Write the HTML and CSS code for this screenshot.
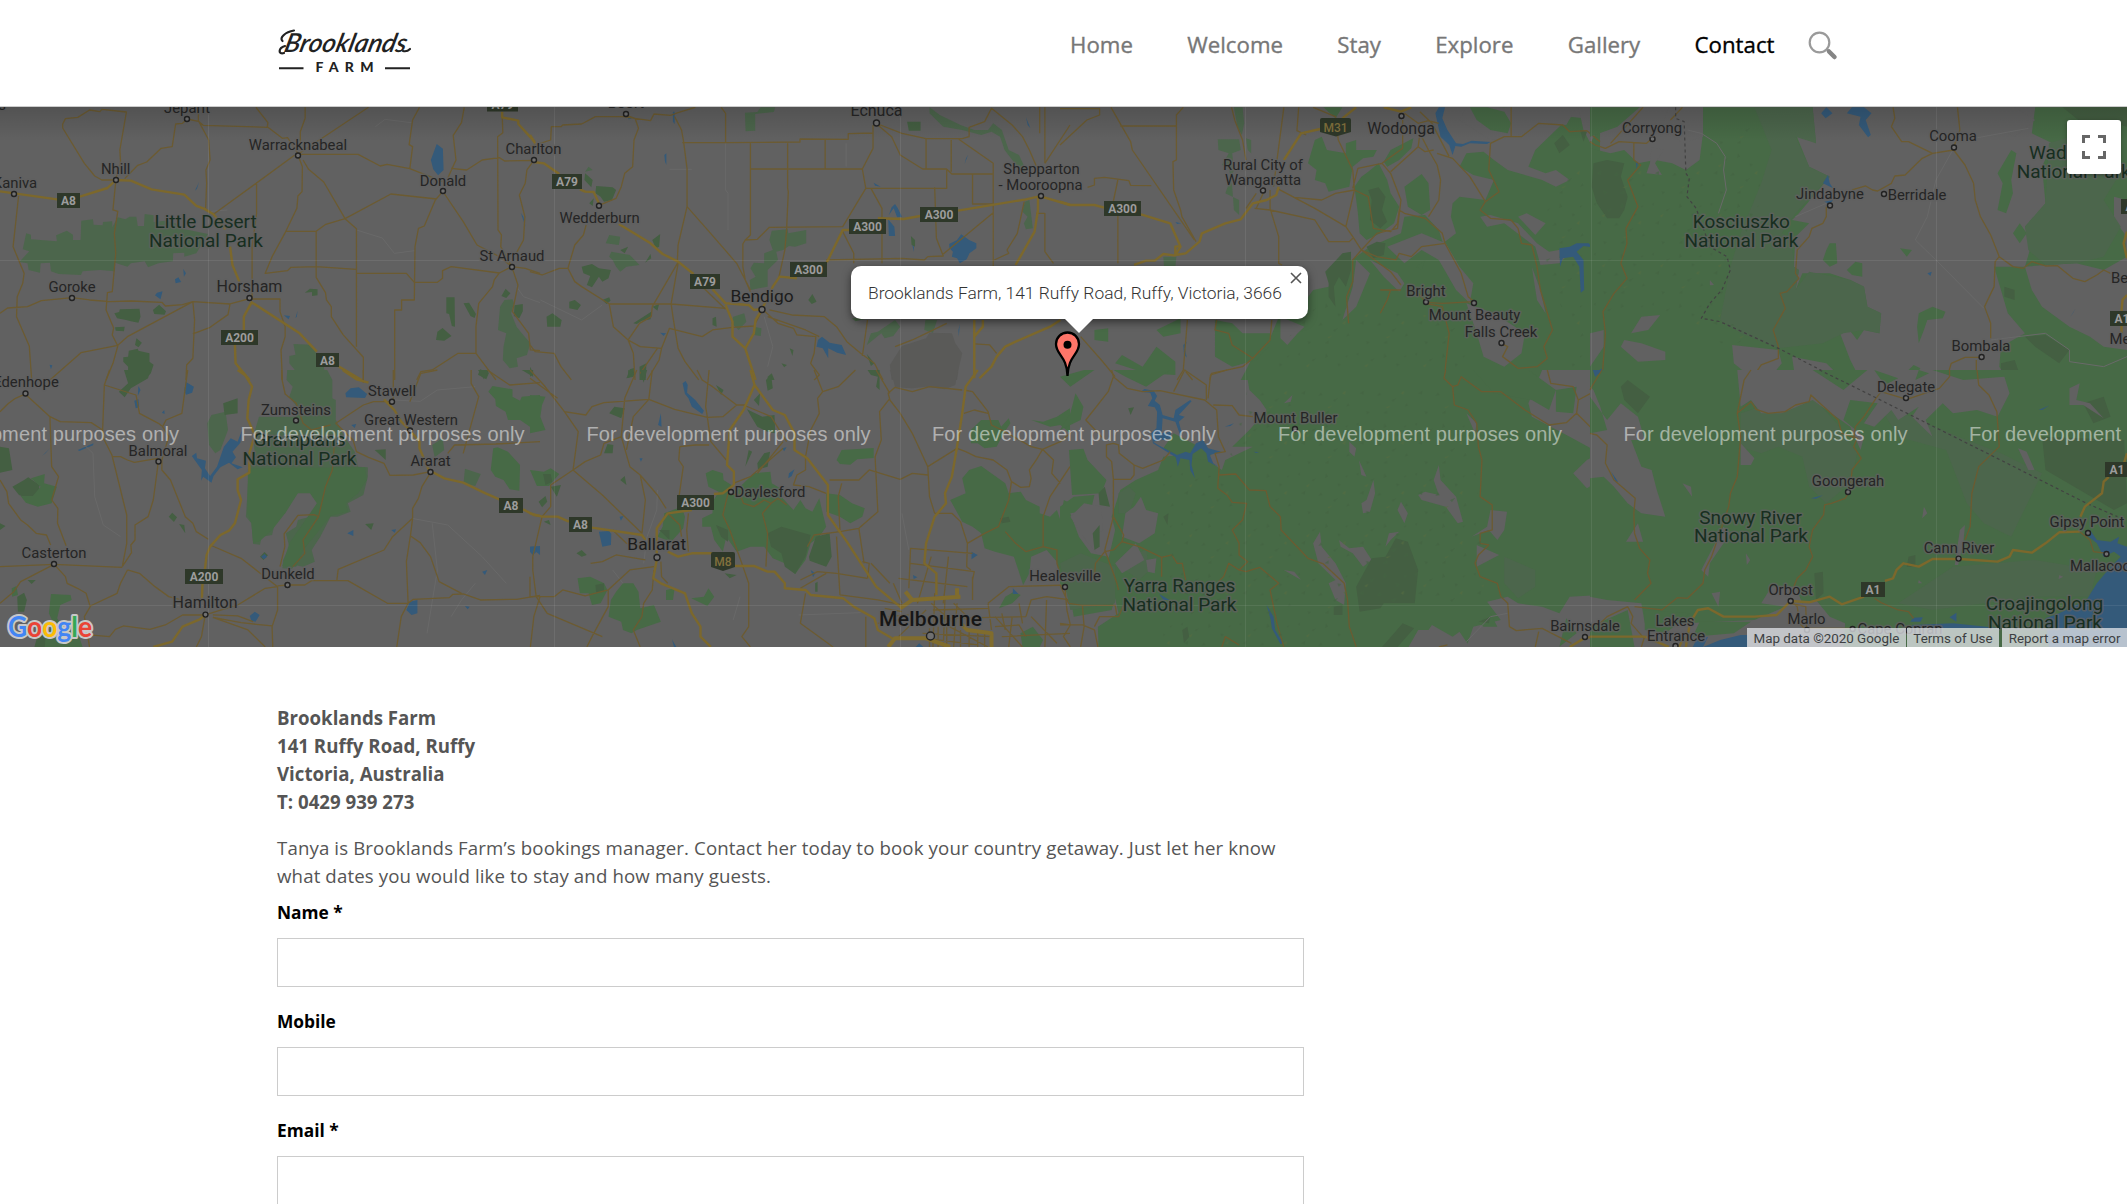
FILE: index.html
```html
<!DOCTYPE html>
<html lang="en">
<head>
<meta charset="utf-8">
<title>Contact - Brooklands Farm</title>
<link rel="stylesheet" href="styles.css">
</head>
<body>
<header class="header">
  <a class="logo" aria-label="Brooklands Farm">
    <svg width="136" height="54" viewBox="277 22 136 54">
      <g transform="translate(283 51.500) skewX(-14)"><text class="script" x="0" y="0" textLength="122" lengthAdjust="spacingAndGlyphs">Brooklands</text></g>
      <path class="swash" d="M294 30.500C285 32 279 38 282.500 41M285 46C278 48 278 55 284 53M403 51Q407 52 410 49"/>
      <text class="farm" x="315.500" y="72.300" textLength="58">FARM</text>
      <path class="rule" d="M279 68.300H303.500M385 68.300H410"/>
    </svg>
  </a>
  <nav class="nav">
    <a>Home</a><a>Welcome</a><a>Stay</a><a>Explore</a><a>Gallery</a><a class="active">Contact</a>
  </nav>
  <svg class="search" width="30" height="30" viewBox="0 0 30 30"><circle cx="11.500" cy="11.500" r="9.800" fill="#fff" stroke="#9a9a9a" stroke-width="2.200"/><path d="M18.500 18L20.500 20" stroke="#999" stroke-width="2"/><path d="M21 20.500L26.500 26" stroke="#858585" stroke-width="4.500" stroke-linecap="round"/></svg>
</header>

<section class="map">
<svg class="canvas" width="2127" height="540" viewBox="0 107 2127 540">
<defs>
  <linearGradient id="shade" x1="0" y1="0" x2="0" y2="1"><stop offset="0" stop-color="#000" stop-opacity=".15"/><stop offset="1" stop-color="#000" stop-opacity="0"/></linearGradient>
  <pattern id="relief" width="170" height="150" patternUnits="userSpaceOnUse">
    <path fill="#426341" opacity=".6" d="M10 12l9-5-4 12zM50 30l14-6-9 12zM92 8l7 12-10 5zM125 40l12 2-8 10zM20 70l13-9-2 14zM70 78l8-12 5 10zM112 90l16-7-10 14zM150 110l7-12 4 9zM38 122l12 4-8 8zM88 130l12-9v10zM148 18l9-3-5 9z"/>
    <path fill="#546b40" opacity=".75" d="M34 48l11-7-5 11zM140 70l9-8-2 12zM96 112l14-5-9 8z"/>
  </pattern>
</defs>
<rect class="land" x="0" y="107" width="2127" height="540"/>

<!-- Little Desert -->
<g class="tile" transform="translate(0 100) scale(.3444 .3333)">
  <path class="l" d="M76 400L90 404V418L165 424L163 406L194 392L212 404V420H234L236 362L270 358L272 374L298 376L299 366L326 364V382L342 352L364 358L376 350H396L400 378H418L420 342L446 346V366L480 362L510 370L520 384L604 402L570 460L535 470V458L503 460L502 484L460 490L430 502L420 484L380 490L370 500L334 488V514L290 510L240 514L235 525L170 522L148 514L145 488L118 490L116 518L83 510L80 490L56 486L70 470L85 454L66 448Z"/>
  <path class="d" d="M332 640L346 636L348 628L405 626L408 650L402 668L380 664L366 660L340 655ZM444 630L462 614L482 634L478 644L448 642ZM334 682L362 680L360 694L336 692ZM396 715L412 728L402 742L392 735ZM374 752L400 746L402 752L434 760V785L446 794L438 820L420 840H372V800L358 785V772L372 770ZM885 578L900 566L922 568V586L906 588V576ZM1296 592H1320L1321 680L1312 678L1304 642L1296 640ZM1346 610L1362 608L1382 642L1378 654L1366 648ZM1266 720L1270 695L1285 684L1311 708L1290 722ZM1456 588L1468 566L1482 580L1470 594ZM1494 616L1518 612V634L1508 655L1492 648ZM1388 824L1394 808L1420 818L1412 838Z"/>
  <path class="l" d="M852 732L905 734L918 760L940 800L948 840H835L838 815L856 810L840 790V768L858 764ZM1452 620L1465 600L1488 598L1492 610L1484 640L1500 680L1515 700L1540 730L1530 765L1500 775L1504 800L1480 805L1460 780L1462 740L1470 700L1446 690Z"/>
  <path class="w" d="M1268 132L1286 146L1288 210L1272 226L1258 208L1251 180ZM578 246L572 266L566 272ZM532 506L540 520L534 530ZM510 550L508 538L518 532L526 546ZM450 586L456 578L472 574L466 598ZM824 646L842 648L838 658ZM864 632L862 650L858 654ZM144 794L152 796L148 808ZM1512 338L1520 350L1526 380Z"/>
  <path class="h" d="M1090 80L1118 58L1195 68M1035 390L1110 414L1145 460L1205 452M1500 560L1520 590L1568 608M600 335L660 330"/>
  <path class="r" d="M336 240H296L275 228L245 190L182 84V72L190 56L226 52L260 30L290 35L296 28L367 36L348 150L350 185L336 238M543 57L530 70L510 72L500 140L468 145L426 186L400 196L362 236M543 57L576 64L590 76L778 82L820 115L835 113L865 160M576 22V62L606 120L610 180L598 210L600 250L597 328M743 22L778 68L776 82M886 22V55L872 95V150M1070 22L865 163H1040L1104 198L1124 193L1190 206L1285 245M1218 22L1198 60L1188 134L1198 140L1190 206M1348 22L1340 68L1316 106L1324 180L1300 235M1310 205L1355 210L1400 180L1450 173L1465 183L1550 181M1458 40L1460 98L1445 110L1446 390L1456 405L1454 440L1486 500M1550 181L1530 210L1525 250L1508 285L1524 350L1520 420L1500 458M855 166L620 343M745 246V340L732 440V598M865 165L878 200L877 275L865 288L862 325L830 394H918V500M880 180L896 208L940 246L1002 356L1035 386V740M1268 297L1135 282L1002 356L946 373L918 394M830 394L790 470L770 520L835 512L845 502L918 500L1035 508V520H1180L1203 547M1285 275L1264 300L1232 378L1215 385L1205 440L1203 600H1166V630H1146V840M1285 273L1345 365L1385 435L1450 470L1486 500M1203 547H1270L1285 535V512L1310 500L1450 519L1486 500L1525 505L1568 520M1450 519L1435 540L1430 560L1390 610L1382 680V760L1440 840M1486 500L1504 555L1488 635L1535 700L1540 750L1568 752M918 500V532L945 578L948 600L962 620V650L996 704L1055 772V840M54 288L38 440L70 520L66 550L50 590L48 650L85 738L92 840M0 640L22 624L80 620L120 602L210 593L260 600L320 605L380 603L470 607L480 618L530 614L560 605L668 612L722 597H813V635L828 680V710L816 750L820 840M336 245L328 330L342 334L332 400L336 460L326 575L312 578L308 630L330 684L326 705L342 738L328 790L308 840M560 605L370 710L342 736L235 758L145 840M560 605L565 660L560 775L542 795L540 840M668 612L662 644L610 682L560 702M1210 840L1222 815L1255 810L1330 760H1382"/>
  <path class="R" d="M0 274L166 298M232 290L312 264L336 240L380 242L440 268L535 284L570 318L592 326L620 343L655 388M668 440L675 495L695 545M728 605L870 700L920 755M984 800L1050 840M730 608L708 650V690M682 734L684 790L716 830L725 840M1458 35V52L1505 62V72L1552 125"/>
</g>

<!-- Grampians -->
<g class="tile" transform="translate(0 370) scale(.3444 .3333)">
  <path class="l" d="M834 0H950L965 30V85L975 90V150L1000 200L1030 245L1040 290L1068 292V320L1055 375L1010 400L1018 425L980 440L960 440L930 500L905 540L914 575L880 590L855 585L848 597L820 595L822 570L840 530L830 490L860 470L865 450L900 440L925 400L905 370L870 365L850 380L828 430L800 450L790 495L760 500L755 524L735 522L730 460L714 440L720 340L740 310L720 290L740 250L735 200L752 140L860 140L862 110L840 80L850 50L832 30ZM602 160L614 135L655 125L662 180L640 240L625 250L607 225Z"/>
  <path class="g" d="M720 296L1060 292L1065 330L1040 370L1005 400L1010 425L960 438L920 490L880 540L860 590L820 588L840 520L920 400L900 370H865L828 430L790 480L752 515L735 518L730 460L718 430Z"/>
  <path class="d" d="M360 0H436L430 25L380 55L362 82L345 65L372 40ZM648 100L690 85V130L652 135ZM490 440L500 428L514 442L505 456ZM520 462L535 465L538 490ZM755 560L768 546L778 556L765 570ZM1060 462L1085 460L1078 480ZM1088 240L1120 238V270ZM0 230L26 235L36 300L0 308ZM36 350L70 330L82 322L115 345L110 375L95 390L55 375ZM0 460L16 468L0 480ZM80 630H104L92 642ZM50 680L70 668L78 690L70 725H52ZM1388 0H1420L1405 28ZM1515 0H1548V20ZM108 800L140 790L180 800L210 831H100Z"/>
  <path class="g" d="M90 325L130 312L128 340L165 350L150 400L110 410L75 398L60 378H95L118 350ZM1418 65L1430 48L1488 58V80L1510 92L1515 80L1568 75V160L1545 175L1510 150H1475L1468 125L1440 108L1438 88ZM1432 235L1445 232L1475 245L1510 285L1508 362L1480 358L1462 330L1438 320L1425 300ZM34 655L48 648L52 675L35 680ZM148 672L205 675L208 690L175 705L166 745L195 790L220 770L240 831H130L132 800L155 760L142 730Z"/>
  <path class="l" d="M1350 296L1396 312L1380 348L1346 340ZM1255 225L1285 205L1290 240L1262 262Z"/>
  <path class="w" d="M1018 55L1042 52L1066 72L1060 84L1005 82L1003 70ZM540 36L563 50L558 68L540 74L535 60ZM470 128L477 120L478 132ZM390 92L402 88L404 112L394 115ZM402 48L408 60L400 78ZM226 240L272 220L270 226L230 243ZM145 235L122 258L132 250ZM557 258L570 248L572 265L598 272L595 295L610 318L630 290L650 230L670 205L690 215L702 182L698 218L675 245L685 262L672 280L705 292L690 298L665 278L640 292L620 318L614 338L590 320L584 332L586 300ZM1008 490L1026 480V498ZM1136 480L1150 478L1146 488ZM758 560L768 552L776 560L766 568ZM1180 720L1190 695L1212 690V730L1195 735ZM725 738L740 725L754 735L742 755L730 752ZM1540 530L1568 528V555ZM1400 605L1415 600L1408 615ZM1350 708L1364 710L1358 718ZM1020 165L1034 162L1030 174Z"/>
  <path class="h" d="M225 205L270 250L275 380L300 465L350 500M1195 445L1300 465L1400 560L1470 640M1255 460L1270 600L1240 790M1140 90L1220 94L1270 60L1380 50M1380 640L1340 690L1310 740"/>
  <path class="r" d="M73 72L45 85L25 100L0 125M73 72L145 140L175 155L265 158L298 180M145 140L150 290L170 320L150 390L168 415L167 460L192 527M318 0L303 45L298 180L300 205L325 255L368 435V520L355 590M303 45L395 75L405 130L460 160L470 168M545 0L528 130L482 150L472 170L490 200L470 270M325 260H350L370 270L390 277L458 265V290L445 390L430 440L392 465V510L380 525L382 548L355 590M470 270V300L495 330L538 440L560 460L570 485L605 508M0 330L20 365L25 400L60 450L80 465L105 490L135 495L147 525M0 590L157 583L355 592M157 583L60 635L40 665L0 700M157 583L190 620L195 640L225 655L250 670L262 710L245 740L260 831M370 600L350 640L340 670L262 708M370 600L405 610L450 650L490 680L525 690M610 525L700 565L806 650M806 648L834 645H885L905 632H1010L1125 700H1185L1200 688L1305 683L1315 673L1345 672L1395 690L1500 688L1568 676M806 650L770 655L690 705L596 735M806 650V720L790 770L792 831M596 735H530L480 765L435 778L358 768L335 778L318 800L260 795M596 735L585 800L570 831M618 742L700 758L790 768M618 735L690 738L735 755M618 742L720 780L770 831M978 632L982 598L1115 540L1140 500L1198 445M1198 445V415L1215 385L1225 350L1250 308M1198 445L1192 495L1180 575L1185 700L1165 740L1152 831M1192 498L1220 518L1250 560L1275 635L1340 670M1250 305L1200 315L1132 316L1115 280L1070 262L1035 245L1025 210L975 160L1055 105L1085 95H1135M1300 250L1320 225L1440 222L1568 215M1345 250L1390 80L1368 40V0M1415 0L1480 45L1568 38M970 190V235L965 300L945 350L925 440L880 510L885 550L850 590M925 440L912 434L865 436L825 492L827 530L813 590M1055 0V38M1142 0V92M1270 0L1222 10L1190 95M818 0V25L828 72L860 100L880 160L905 180L960 165M1568 680L1550 740L1540 831"/>
  <path class="R" d="M690 0L712 16L732 50L722 90L718 145L740 195L724 250V308L690 328V360L700 390L682 460L665 482L640 495L610 530L600 555L595 598M588 641L586 690M596 735L580 748L530 770L500 815L445 831M995 0L1035 28L1070 38M1115 88L1145 120L1165 155L1190 180L1218 215V235L1245 300L1290 325L1345 338L1410 370L1450 388M1519 418L1550 435L1568 438"/>
</g>

<!-- Bendigo -->
<g class="tile" transform="translate(530 100) scale(.3444 .3333)">
  <path class="l" d="M624 38L660 36L670 22H712L708 36L654 42V92L626 94ZM702 392L748 388L750 400L802 390V430L770 440L752 438L735 450L715 455L720 480L690 510V560L640 570L638 540L655 530L640 505L650 488L680 490V460L705 450L695 420ZM1437 305L1450 300L1460 385L1440 388L1434 370L1445 350L1430 335ZM236 455L290 465L318 495L280 500L262 515L250 500L240 480L230 470ZM1160 22L1190 45L1250 75L1290 90L1330 90L1345 70L1370 90L1390 150L1420 165L1440 210L1430 220L1378 150L1365 110L1340 95L1310 105L1255 90L1200 80L1160 40ZM220 430L230 405L262 410L258 435ZM590 650L622 640L628 665L606 690L585 670ZM650 680L672 685L670 708L650 705ZM978 735L990 700L1010 695L1060 660L1075 680L1055 708L1030 715L1020 700ZM1148 660H1182L1170 698L1145 690ZM170 200L182 210L160 215Z"/>
  <path class="d" d="M1095 65H1134V92H1100ZM160 220L182 240L178 262L158 240ZM192 258L240 262L250 270L238 300L215 305L205 290L190 280ZM172 310L185 295L182 318ZM150 500L180 492L200 505L235 510L228 535L210 545L200 530L180 562L165 555L175 528L155 520ZM355 420L378 402L375 440L365 445ZM334 488L350 462L352 475ZM262 450L285 440L275 460ZM114 605L130 600L148 615L138 630L114 625ZM210 600L230 592L234 602L222 612ZM48 650L65 640L92 660L88 680L50 680ZM530 655L540 650L542 680L530 675ZM300 670L352 635L350 658L325 662L310 672ZM356 620L375 612L370 632ZM808 600L820 582L832 605L818 612ZM1106 408L1118 420V440L1108 435ZM754 745L765 750L762 768ZM730 790L746 795L738 802ZM690 830L702 820L710 840H690ZM280 835L290 808L302 804V830ZM318 800L338 790L336 840H318ZM978 762L1000 790L990 798ZM0 800L10 820L0 830ZM935 655H980L945 664Z"/>
  <path class="u" d="M1045 795L1080 738L1150 715L1160 698L1225 700L1235 730L1255 760L1245 805L1240 840H1050Z"/>
  <path class="w" d="M1217 432L1240 420L1252 403L1275 420L1296 430V445L1276 460L1268 478L1248 490L1240 475L1225 470L1228 455L1218 445ZM1040 358L1058 380L1060 408H1042ZM1060 312L1068 325L1080 350L1066 352L1056 325L1042 345L1050 322ZM836 720L848 710L870 728L905 735L918 765L892 758L866 745V775L850 745L832 740ZM390 165L396 160V195L392 185ZM415 35H420V72L415 65ZM1440 52L1453 85L1445 75ZM1272 165L1262 192L1266 175ZM998 248L1018 260L1002 257ZM1110 435L1115 440V456ZM1248 672L1245 710L1244 690ZM378 698L395 700L388 708ZM284 50L295 56L286 58Z"/>
  <path class="h" d="M568 130V270L575 280V390M918 130V200M1345 330V495M405 208H470M30 600L150 660L210 615M680 650L705 740L690 800"/>
  <path class="r" d="M0 140L60 120L62 80H90L95 75L150 72L190 50H270L350 62L360 42L408 46L430 38L480 22M278 45L305 55L315 85L302 120L298 200L275 220L265 260L250 295L200 316M420 50L440 90L446 125L456 206V320L520 395L600 490L640 570M456 320L430 435L428 480L430 490L410 610M442 128H568V40L555 22M568 128L784 126V117L924 118V101L996 99M640 130V405L625 420L618 432V500L625 540L640 575M857 117V207M640 207H965L996 145V75M748 130V265L750 275L745 390L740 450L722 535M624 420L660 418L695 382L908 380L975 265L965 207M975 265H1210V208L1225 222H1345M1175 262L1180 415L1200 468L1155 470L1145 480L1080 475L860 480M990 265L1022 325V350M1022 350V490M908 395L940 460V490M1010 75L1050 110L1075 165L1140 207H1210M1010 72L1080 100L1150 116H1255L1275 110V82L1320 65L1340 25L1400 75L1430 110L1450 150L1475 210M1150 116V207M1223 120V215M1245 118L1345 190V500M1285 222V312H1345M1345 338L1200 462M1495 22V190M1568 75L1495 190M1435 305L1415 400L1385 450L1390 460L1348 480M1470 340H1495V455L1520 490M1480 100V22M163 375L155 405L130 435L110 505L85 505L35 525L0 515M110 505L130 545L150 560L230 612H410L568 625M230 612L242 680L285 720L300 760L305 840M428 490L355 620L352 650L318 670L285 720M410 612L415 650L430 745L450 785L490 840M285 720L320 740L382 745L405 685L500 710L530 690L588 682L650 678L675 630M382 745L375 780L340 840M320 820L370 745M568 628L480 540M675 628L720 670L765 685L775 705L830 710L825 760L815 790L840 825L825 840M695 630L760 645L855 650L890 680L920 725L960 760L1000 790L1025 840M690 650L800 690L840 710M965 768L980 660M1060 740L1110 720L1150 700L1210 670M1290 732L1335 735L1355 760M0 735L15 755L70 760L90 800L120 840"/>
  <path class="R" d="M0 105L15 130M11 186L40 190L85 222M145 268L160 275L185 276L200 310M258 372L350 430L385 462L430 485L475 522M530 568L568 610L635 615L650 630L674 627L705 560L725 530L775 535M862 487L908 390H927M1010 355L1085 357L1133 348M1243 332L1440 298L1475 290V330L1465 395L1410 495M1485 290L1568 315M674 627L655 660L650 700L625 745L655 840M568 615L588 665V710L625 745M1290 660V835M1315 660V680L1290 710M1540 660L1510 680L1410 725L1380 740L1355 770L1340 800L1305 835"/>
</g>

<!-- Melbourne -->
<g class="tile" transform="translate(530 370) scale(.3444 .3333)">
  <path class="g" d="M510 310L530 300L560 310L562 330L585 345L580 365L600 360L650 310L698 305L702 340L735 360L730 380L765 420L785 390L800 415L820 425L840 385L850 430L860 470L840 500L815 520L800 570L770 612L740 580L705 565L680 530H640L600 545L570 500L560 545L535 510L525 470L500 470V445L530 430V395L548 365L518 350ZM890 270L905 240L998 234V264L950 268L930 284L900 282ZM1220 390L1265 370L1255 325L1275 300L1310 288L1380 340L1390 370L1425 365L1440 390L1480 410V430L1510 440L1530 420L1540 450L1550 390L1568 400V620H1540L1530 575L1500 540L1455 560L1450 610L1432 645L1405 560L1350 545L1320 535L1310 490L1285 470L1255 455ZM390 430L440 410L450 440L445 475L410 515L370 500L385 470ZM138 625L175 620L215 640L225 660L205 700L180 705L170 670L145 670ZM250 665L270 640L300 640L315 665L320 715L360 705L380 755L310 780L295 790L270 780L265 755L228 740L235 690ZM0 75L45 80L35 105L30 140L45 180L0 190ZM0 300L40 305L60 295L85 312L55 348H20ZM860 370L900 375L935 400L972 415L965 440L930 460L900 440L860 425ZM1280 180L1310 150L1360 150L1368 170L1390 145L1395 160L1375 190L1355 230L1320 235L1300 220L1280 220ZM1455 150L1490 155L1530 140L1568 115V190L1540 165L1510 170ZM468 685L505 680L518 655L535 680L515 708ZM1362 715L1380 680L1405 665L1425 675L1400 700ZM1424 790L1460 770L1490 810L1480 831H1430ZM395 660L420 655L415 690H395Z"/>
  <path class="d" d="M690 490L730 470L815 495L800 560L770 612L740 590L730 550L700 530ZM810 560L830 500L870 490L876 560L860 590L812 572ZM215 250L225 222L242 225L240 250ZM262 330L275 318L280 345ZM135 550L150 540L165 555L150 560ZM38 312L60 312L65 335L45 345ZM25 395L45 378L50 395L35 412ZM630 118L675 140L710 135L712 190L690 185L660 170L645 145ZM685 30L700 15L705 55L690 62ZM650 90L668 70L665 108ZM660 280L680 250L697 245L690 290L662 298ZM625 290L635 240L645 245ZM190 645L215 640L215 665L192 668ZM565 610L600 615L580 625ZM828 640L835 635V665H828ZM540 465L575 480L575 515L555 500ZM375 480H405V510ZM980 0H1015V60L1005 50L1010 20L990 15ZM285 0L300 5L285 25ZM320 0H340L330 38ZM540 45L562 60L555 75ZM230 130L245 110L275 115L265 145ZM1365 445L1390 440L1395 455L1370 460ZM60 350L90 345L78 380ZM40 455L55 450L60 465Z"/>
  <path class="u" d="M1045 0H1242L1235 45L1205 58L1150 50L1110 55L1060 52L1055 30Z"/>
  <path class="w" d="M443 40L452 33L458 45L456 68L480 90L505 122L500 132L470 110L460 85L450 72ZM372 165L380 130L382 170ZM200 485L230 483L236 492L235 525L210 530ZM752 310L768 298L760 318L750 325ZM732 235L745 232L738 244ZM0 530L18 530L20 545L8 555L0 545ZM1282 545L1300 555L1282 568ZM1402 655L1418 672H1402ZM815 600L828 610L822 622ZM260 440L272 438L264 452ZM318 265L327 265L322 275ZM1112 615L1125 622L1114 627ZM412 808L425 831H418ZM1120 831L1130 820L1142 831Z"/>
  <path class="h" d="M370 360L368 420L340 500L330 580M1100 540L1080 430M240 600L270 640M780 735L960 728M590 750L610 680"/>
  <path class="r" d="M0 0L40 45L100 125L140 185L125 300L60 345V410L35 440L8 560V600L18 680M100 125L162 135L180 110L215 98L345 88L420 118L515 142L510 110L520 0M310 0L275 85L265 200L290 290L320 315L370 375L395 415M355 0L345 88L300 140L280 240M0 25L80 85M125 300L160 275L205 255L215 220L265 200M125 300L210 375L325 490M320 315L335 390L325 490M485 0L500 30L530 50L600 105H630M620 105L700 140L745 215M515 142L560 140L600 105M515 142L525 215L570 270M850 65L835 85L840 130L815 180L800 260M850 65L825 0M850 65L895 50L945 0M660 310L735 215M590 340L640 320L735 235M575 370L560 435L580 480L615 580L635 640V770L615 800L640 831M575 370L610 375L620 400L650 410L680 390L700 400L675 430L690 490L685 590M700 400L720 385L745 405M800 260V300L775 315L765 345L810 350L860 370M870 330L955 330L985 300L1075 328L1110 310L1155 315M1155 290L1240 235M1155 290L1160 380L1175 430M1155 290L1110 190L1075 130L1045 90L1040 70L1060 52L1110 65L1160 50L1255 60M1045 70L1005 0M1045 85L1015 125L1020 210L1002 260L1010 425L955 475L900 485L825 495L805 530M1240 235L1265 245L1295 260L1345 270L1365 285L1385 300L1398 335L1390 390L1360 470L1320 490L1270 520L1268 590L1280 600M1398 335L1425 352L1450 350L1455 325L1450 300L1470 270L1488 238L1520 270L1515 310L1540 340M1260 60L1285 65L1330 125L1340 165L1370 180L1455 230L1488 238L1540 215L1568 190M1260 130L1290 120L1330 130M1175 430L1225 430L1250 455L1270 520M1380 485L1410 520L1440 545L1490 530L1530 540V580L1545 630M1490 530V440L1510 380L1568 290M435 230L480 225H520M435 230L432 270L445 290L430 400M460 430L455 480L460 545M400 430L435 465L440 500M0 620L0 680H70L95 660L160 678L227 660V710L180 800L165 831M18 680L50 730L210 800M227 660L290 600L360 590M176 580L210 575L250 555L335 570M240 480L280 520L330 530M360 600L355 660L330 700L325 740L300 780L320 831M380 575L382 620L400 640M800 670L785 760L880 831M785 630L835 605L890 610L980 625M890 500L900 675M955 475L970 580M860 610L785 655M980 625L985 580L965 575M905 340L895 380L900 480M900 675L1010 690L1080 705M1100 655L1105 535L1285 550M1105 580L1290 605L1285 630M1070 625L1270 650M1125 700L1165 560M1200 700L1215 560M1175 670L1170 831M1240 700L1230 831M1080 700L1055 640M1045 640L990 580M1330 700L1390 650L1568 645M1170 720L1330 715M1190 745L1440 740M1330 700L1340 780M1285 620V690M1440 740L1455 690L1500 680L1568 690M1350 740L1430 831M1455 740L1530 820M1400 740L1390 831M1500 690L1495 831M1370 800L1568 790M975 740V831"/>
  <path class="r" d="M1140 790L1340 800M1150 805L1300 825M1160 775V831M1185 770V831M1210 770V831M1250 780V831M1275 780V831M1300 780V831M1320 790V831M1200 760L1330 831M1230 700L1300 770M1150 720L1070 800M1165 700L1230 760M1205 680L1200 831M1030 715L1080 725M1040 740L1100 735M1350 770L1420 765L1440 800M1370 730L1380 780M1420 700L1430 760M1010 760L1070 750"/>
  <path class="R" d="M0 430L35 440H80L113 455M180 473L325 495L335 510M368 550V475L400 430L470 420M534 372L560 370L592 345V305L572 285L580 180L620 120L652 45L640 0M652 45L705 120L740 135L768 190V240L805 265L865 345V435L920 515L1005 650L1080 715M1300 0L1265 50L1255 130L1240 230L1225 320L1205 370L1208 400L1175 440L1150 520L1145 580L1180 610V675M400 545L430 560L470 550L530 550M595 588H650L690 605H710L740 640V655L800 660L815 675L910 685L940 710L1000 745L1010 780L1060 810M368 570L358 625L380 640L450 670L470 730L495 770V800L525 831"/>
  <path class="X" d="M1090 665L1110 690L1075 715M1110 690L1250 680M1240 655V675M1040 831L1060 805H1150L1220 831M1250 760L1270 780L1340 790V831"/>
</g>

<!-- Alpine forest -->
<g class="tile" transform="translate(1060 100) scale(.3444 .3333)">
  <path class="g" d="M525 840L560 770L610 715L640 640L700 620L735 570L780 560L820 500L860 470L900 440L990 400L1000 350L1060 345L1100 390L1112 430L1150 400L1135 350L1140 310L1160 290L1235 300L1260 240L1200 225L1160 200L1180 160L1230 155L1260 180L1300 210L1400 240L1440 260L1480 240L1440 210L1410 220L1360 200L1380 150L1440 90L1480 50L1568 60V840ZM855 260L875 230L895 215L925 190L950 240L960 280L985 320L970 370L930 400L890 420L870 400L865 340ZM1000 260L1050 222L1070 250L1075 330L1050 345L1010 320ZM940 185L960 150L1026 115L1020 145L985 180L950 200ZM830 130L860 120L860 150L920 150L910 170L880 175L850 200L840 260L780 275L770 250L740 240L745 210L720 190L740 120L760 110L775 150L830 160ZM765 22H820L800 55ZM1190 45L1215 30L1290 22L1360 40L1330 60L1300 100L1250 90L1210 75ZM450 100"/>
  <path class="l" d="M458 118H520L525 150L500 160L505 210L480 280L520 300L520 345L505 330L500 260L490 200L470 195L490 160L460 150ZM540 115L555 120V160L545 150ZM505 22H530L535 70L528 105L515 80ZM300 470H338L335 500H302Z"/>
  <path class="n" d="M950 440L1050 400L1120 430L1160 500L1200 550L1190 610L1150 570L1100 480L1050 450L1000 490ZM900 480L980 520L1000 550L985 575L940 530ZM860 480L900 520L860 620L820 660L850 560ZM1240 380L1290 370L1380 440L1395 495L1450 490L1500 440L1420 455L1385 430L1330 370L1250 345L1220 350ZM1330 350L1355 340L1410 370L1380 405ZM1370 500L1395 570L1410 640L1385 600ZM1180 610L1260 640L1350 700L1340 760L1290 800L1230 770L1210 700ZM640 650L710 680L690 700L660 735L640 715ZM1240 22H1180L1160 60L1250 120L1320 110L1400 70L1470 75L1500 22ZM1505 22H1568V75L1540 130L1520 90Z"/>
  <path class="g" d="M450 660L500 670L530 700L610 700V735L570 780L500 800L450 770ZM280 690L350 655V700L300 710ZM160 790L180 765L240 800L280 740L335 785V825L250 820ZM1035 500L1060 480L1050 510ZM1190 22H1240L1290 35L1310 70L1300 100L1250 90L1210 60ZM100 690L140 685V725L100 720Z"/>
  <path class="d" d="M770 515L820 460L845 455V510L830 560L810 530L795 560L800 620L780 590V550ZM895 270L925 262L945 290L935 330L950 365L930 385L900 360L905 300ZM890 440L920 425L945 430L940 465L910 475ZM1435 130L1460 105L1480 135L1450 160ZM1510 90L1530 95L1520 125ZM1568 235L1548 250V300L1568 320Z"/>
  <path fill="url(#relief)" d="M640 740L760 600L900 640L1050 640L1180 700L1200 840H560ZM1420 280L1568 160V840H1430L1500 700L1400 520Z"/>
  <path class="w" d="M1090 40L1100 22H1118L1110 55L1125 90L1150 130L1170 132L1195 122L1250 126L1240 132L1190 130L1165 140L1148 138L1140 165L1130 135L1105 110ZM1450 445L1480 440L1500 430H1535L1545 442L1520 438L1500 455L1520 480L1522 570L1512 578L1508 500L1490 470L1460 475L1452 500ZM358 735L368 725L362 745L368 772L360 765ZM335 366L352 370L340 372ZM1158 505L1168 525ZM1548 815L1568 805V830Z"/>
  <path class="r" d="M0 26H115V45L78 60L0 135M148 22L205 125L210 150L390 420M175 78H338M358 22L338 45V180L328 185L330 270L350 330L354 350L395 425M168 240L155 303M168 347V490M80 262L100 255V235L130 232L200 242L205 256L265 257M498 22L508 62L530 120L540 180M650 22L625 220M693 22L688 92L715 105M735 22L800 50L808 120L850 210L855 270L830 380L850 410L875 450M630 265L680 292L760 300L800 280L855 270L895 290L910 385L960 395L980 370L985 330L1000 340L1060 355L1110 400L1118 430M630 265L740 325L830 380M565 325L610 330L740 360L780 425L840 425L850 415M610 270V325L635 410V490L645 495M540 325L570 280M570 325L590 280M625 220L620 260M875 450L920 400L980 385L990 300L960 220L935 190L995 145V60M935 190L865 205L850 265M960 215L1040 140L1045 100L1070 150L1095 195L1105 240L1100 300L1070 350M1040 140L1060 155L1085 150M1095 160L1140 175L1190 230L1235 305L1220 330L1250 355L1310 360L1330 385L1340 430L1370 435L1385 500L1395 570L1430 690L1405 740L1415 775L1385 800L1330 805L1285 770L1300 740L1281 730M1235 305L1275 275L1245 210L1250 130L1290 110L1340 110L1390 70L1460 75L1480 95L1530 92L1568 125M1045 35L1080 70L1130 170M1000 40L1040 70L1070 62L1100 70M1118 430L1050 440L1020 470L985 460L975 480L920 470L875 450L850 480V545L832 590L838 670M875 450L960 515L990 555M1118 430L1165 520L1185 590L1203 605L1110 610L1063 607L1040 580M1060 610L1110 620L1130 700L1115 840M930 570H990M930 640L950 600L960 570M1310 22V110M370 660L358 810L340 840M455 660L450 690L490 700L500 735L560 775L610 720L615 660M560 775L530 800L440 820L435 840M60 710L120 780L160 830M365 815L385 840"/>
  <path class="R" d="M0 305L30 315H100L128 323M235 343L320 370L350 440L335 465L365 460L405 425L412 400L480 370L525 358L560 310L600 300L628 285L635 260M650 180L700 100L755 87M215 495L250 482H275L300 462L335 467M335 467V440L350 438M820 55L860 22M940 22L990 35L1020 22"/>
</g>

<g class="tile" transform="translate(1060 370) scale(.3444 .3333)">
  <path class="g" d="M540 0H1568V831H112L110 770L170 730L150 640L140 570L160 480L150 440L175 360L220 330L285 300L300 260L400 250L470 300L480 270L560 230L500 230L550 180L600 120L580 90L550 60ZM26 240L68 236L80 270L135 330L120 370L35 375ZM0 410L40 380L100 375L90 420L30 430L55 500L90 550L140 560L170 650L150 720L40 740L30 680L0 640ZM0 180L30 130L45 70L68 110L60 150ZM0 20L70 0H100L30 50ZM155 0H320L250 50L190 20Z"/>
  <path class="l" d="M0 580L60 550L160 590L160 700L30 720ZM170 370L200 350L220 370L200 430L170 430ZM185 560L250 540L260 600L230 630L190 600ZM1290 560L1380 600V650L1330 685L1290 640Z"/>
  <path class="n" d="M180 500L190 430L215 410L235 380L250 420L285 430L275 490L230 520ZM160 580L220 520L245 570L180 610ZM250 570L280 565L275 610L255 605ZM30 440L70 400L120 410L125 480L100 500L105 550L60 490ZM840 215L860 235L855 260L840 245ZM875 400L890 390L910 330L915 370L900 425L880 430ZM980 420L990 395L1010 430L1000 460ZM1040 375L1060 365L1100 375L1085 330L1100 285L1105 330L1150 380L1170 455L1155 460L1120 410L1050 390ZM735 520L755 485L760 530L800 580L830 640L825 705L800 690L780 640L800 630L750 580ZM810 510L840 535L880 530L905 570L880 590L850 550L815 530ZM945 530L955 490L985 485L960 510ZM1250 420L1298 425L1290 480L1270 510L1245 480L1195 500L1240 470ZM1400 0L1360 100L1370 140L1480 200L1568 250V0ZM1240 695L1300 680L1330 700L1400 710L1450 730L1480 680L1568 675V831H1180L1200 770L1280 750ZM1012 831L1040 780H1070L1080 765L1140 800L1160 785L1190 831ZM1490 310L1530 270L1568 250V330L1530 355ZM868 270L890 320L875 315ZM1180 130L1210 160L1205 190ZM650 600L680 605L700 630ZM1210 525L1275 555L1210 590ZM650 100L675 75L670 95Z"/>
  <path class="g" d="M1360 0L1440 60L1420 120L1370 90L1260 70L1200 0ZM1440 60L1500 50L1490 130L1440 125ZM1215 760L1250 730L1270 770H1230ZM1450 830L1470 745L1500 790ZM300 235L330 190L440 250L430 270L340 260Z"/>
  <path class="d" d="M860 650L905 565L945 560L975 505L1010 515L1040 600L1030 700H940L930 715L870 725ZM300 440L315 430L312 465ZM355 780L370 770L375 800L360 820ZM970 790L995 760L1028 775L980 831H935ZM95 490L115 465V530L100 540ZM112 370L130 350L145 410L115 405ZM795 710L820 705V735L795 735ZM198 115L215 112L205 135ZM1215 755L1250 740L1245 760Z"/>
  <path class="w" d="M235 65L245 57L272 62L282 78L275 92L290 105L298 135L330 145L335 120L378 90L382 94L345 135L362 140L345 155L355 195L350 198L335 155L298 145L295 190L320 185L325 205L270 215L285 225L340 255L365 245L378 250L395 220L415 210L430 235L468 245L435 255L445 280L460 290L430 275L425 250L410 235L385 252L382 285L392 325L378 300L376 270L350 265L342 290L336 262L270 220L265 190L280 175L282 125L275 112L255 108L268 85L262 68ZM478 170L505 160L495 168ZM288 672L318 690H300ZM600 705L620 740L625 780L648 820L640 822L615 775L612 750ZM562 245L578 246L570 249ZM1548 0H1568V10L1552 20Z"/>
  <path class="h" d="M1180 815L1250 740L1300 730"/>
  <path class="r" d="M150 0L155 20L195 55L240 65L290 62L420 90L455 120L460 200L480 245L450 250L462 290L458 355L485 375L500 397L542 400L530 450L500 480L520 520V555L545 575L520 600L490 580L475 620L460 635M155 20L140 65L75 150L125 205M135 225L155 220L170 225L172 250L215 285V315L205 328H155L150 275L135 260ZM215 285L240 295L300 270L320 245M155 328V440L185 495L180 515L230 530L295 562L325 555L340 580H355L365 630M155 440L130 540L155 610L165 640L170 660M180 515L155 540L130 545L103 580L100 620M295 562V620M330 65L362 0L425 45V90M485 0L437 15L430 85M445 105L500 107L520 135L560 140M462 315L510 312L550 360L598 362L610 410L640 440L642 480L720 565L765 582L825 640L835 690L840 770L850 800L860 831M520 600L540 605L580 592L635 640L610 660L630 760L650 831M1120 0L1115 25L1140 50L1145 105L1185 120L1210 160L1215 230L1225 270L1220 380L1255 405V480L1220 490V520L1245 525L1215 555L1205 580L1220 620L1270 640L1280 680L1300 700L1305 770L1325 782L1400 775L1485 820M1140 50L1155 45L1165 20L1185 35L1225 65L1280 65L1350 120L1420 165L1470 158L1500 130L1505 90L1490 50L1425 40L1415 0M1505 90L1568 55M1500 130L1568 200M1390 785L1380 831M0 645L25 700L65 706H160M0 760L30 765L20 720L15 660M100 770L115 740H170L185 705M65 706L70 770L60 831M0 765L65 765L100 780L110 831M30 765L10 800L30 831M160 705L165 735M470 831L480 800L520 825M1100 831L1125 825"/>
  <path class="R" d="M1480 831L1525 803L1568 800"/>
  <path fill="url(#relief)" d="M545 60H1100L1200 200L1230 600L1230 700H850L700 520L600 350L480 240Z"/>
  <path fill="url(#relief)" d="M300 300L460 320L600 450L820 700V831H300Z"/>
</g>

<!-- Kosciuszko -->
<g class="tile" transform="translate(1590 100) scale(.34247 .3333)">
  <path class="g" d="M0 22H145L80 80L0 110ZM330 22H650L660 130L600 100L640 200L700 230L610 340L590 360L640 370L600 410L595 500L610 510L600 570L620 520H700L760 540L800 560L810 620L850 640L845 700L800 690L780 720L750 680L730 700L760 780L790 840H0V145L60 160L100 150L140 190L190 180L240 190L280 210L320 180L330 100ZM690 450L700 430H718L722 490L700 500L680 480ZM750 510L775 485L795 490V530L765 525ZM1230 150L1245 160L1230 240L1235 280L1215 340L1190 330L1205 250L1190 220ZM1300 22H1568V300L1530 290V360L1560 400L1568 470L1500 510L1420 490L1330 495L1270 500L1290 430L1270 380L1330 310L1320 200L1350 130L1290 100ZM1180 500L1270 500L1290 570L1320 620L1400 680L1460 710L1500 740L1568 750V840H1220L1195 800L1200 740L1270 700L1220 640L1200 570ZM1235 400L1255 370L1275 400L1255 430ZM905 445L940 450L925 470ZM960 640L1000 620L1038 635L1030 655L985 660L975 690L960 730L955 680ZM930 810L945 795L965 805L950 825Z"/>
  <path class="l" d="M480 22H650L660 130L600 110L640 200L700 230L600 340L560 400L590 420L595 500L610 510L600 570L640 515L760 540L800 560L810 620L850 640L845 700L800 690L740 700L680 730L550 745L440 700L380 660L410 500L440 400L500 250L530 150ZM1340 130L1400 110L1500 100L1560 200L1500 300L1550 380L1500 470L1420 490L1330 495L1280 450L1270 380L1330 310Z"/>
  <path class="n" d="M120 700L150 650L205 645L170 690ZM90 740L100 720L150 730L220 755V780L140 785ZM350 540L362 555L350 556ZM415 735L550 750L560 790L520 840H480L420 790ZM230 22H330V110L270 130L210 80ZM0 700L40 690V740L0 800ZM590 770L690 790L740 840H600ZM180 140L215 150L190 190L210 225L165 220L175 190ZM1200 22H1240L1300 60L1240 110L1200 90Z"/>
  <path class="d" d="M10 190L50 180L100 190L90 230L110 290L100 330L85 355H50L20 310L5 260ZM1380 22H1568V80L1500 60L1450 80ZM1210 560L1240 570L1240 600L1210 590ZM1270 710L1330 705L1400 750L1370 790L1300 740ZM1200 790L1240 780L1260 840H1200Z"/>
  <path fill="url(#relief)" d="M0 200L280 220L400 100L480 60L500 300L420 480L380 650L480 710L400 740L240 640L0 640Z"/>
  <path class="w" d="M675 40L690 22L708 40L688 55ZM750 40L765 22H800L822 40L805 60L820 105L812 112L785 75L790 50ZM695 225L700 250L710 265L680 250ZM684 305L710 300L700 312ZM985 520L998 515L994 528ZM134 185L140 190L136 208ZM1418 625L1402 652L1410 640ZM8 820L38 805L20 830Z"/>
  <path class="h" d="M285 90L325 100L370 130L395 170L390 210L398 270L375 340M600 350L690 310M1062 145L1010 240L985 350L950 420L1010 480L1150 625M1095 120L1280 85M1170 720L1330 700L1400 750V785L1500 800L1568 770M395 0"/>
  <path class="r" d="M0 125L15 135L45 145L85 125L130 128L165 130L182 115M60 130L155 22M128 128V180L148 195L110 240L140 320L105 385L108 430L90 490L108 535L70 580L38 635L45 700L35 840M885 22L890 55L880 80L910 125H930L1000 160L1062 150M1073 22L1080 90L1062 142M1062 150L1095 195L1120 250L1125 300L1140 350L1170 405L1195 470L1183 485L1180 560L1152 620L1170 670V715M1000 160L970 175L920 225L890 228L880 250L840 273L825 270L805 258L765 270M690 320V350L680 370L648 385L640 410L605 450L600 520L610 535L575 575L555 580L570 625L535 690L550 740V775L500 795L470 840M1195 470L1235 500L1265 505L1290 485L1330 498L1365 497L1410 535L1445 545L1480 525L1500 510L1520 520M1143 772H1095L1055 790L1040 840M1128 780V840M235 60L270 22"/>
  <path class="s" d="M250 22V55L275 65L280 220L290 235L283 290L310 325L350 440L400 470L410 510L385 570L350 610L325 655L380 665L560 750L730 840"/>
  <path class="R" d="M1568 395L1558 430L1568 475M1568 585L1555 600L1552 633M1552 677V700"/>
</g>

<!-- East Gippsland -->
<g class="tile" transform="translate(1590 370) scale(.34247 .3333)">
  <rect class="g" x="0" y="0" width="1568" height="831"/>
  <path class="l" d="M560 90L650 80L720 160L780 250L760 340L690 400L640 350L620 260L550 230L500 250L440 230V130ZM840 100L960 150L1100 210L1200 250L1320 310L1230 500L1150 460L1100 400L1040 240L900 200ZM1060 590L1300 570L1480 600L1460 680L1300 680L1000 720L900 700Z"/>
  <path class="d" d="M655 610L680 605L682 670L660 690ZM930 560L950 555V590L925 590ZM1320 200L1560 210L1568 400L1530 420L1330 300ZM1440 100L1500 80L1520 140L1470 160ZM90 50L110 30L175 80L140 130L100 90Z"/>
  <path class="n" d="M0 190L50 180L30 110L10 60L0 50V80L50 150L90 100L140 140L160 210L120 210L150 290L180 300L195 360L220 440L150 430L110 400L70 350L40 320L0 325ZM430 0H650L740 60L810 0H1000L1090 30L1210 20L1225 70L1190 140L1130 120L1060 130L1030 100L980 150L1000 200L940 140L960 110L900 150L880 120L830 170L800 160L840 100L760 90L740 150L800 200L790 240L760 170L650 90L560 130H500L470 90L440 110ZM440 220L480 265L470 285H440ZM1250 235L1275 245L1298 300L1280 300ZM325 600L390 470L410 490L350 580L345 620ZM1080 480L1095 465L1090 520L1075 585H1065ZM500 700L530 650H600L620 700L660 690L700 740L745 760L740 831H130L110 720L0 770V680L50 690L150 700L160 760L280 760L480 750L570 710ZM270 340L295 350L298 380ZM140 460L155 515L105 515ZM455 550L468 570L458 585ZM975 410L985 430L970 445ZM960 630L970 640H958ZM1370 615L1382 620L1368 628ZM355 670L380 665L375 710ZM1400 55L1430 40L1420 90L1460 100L1500 145L1440 105H1400Z"/>
  <path class="g" d="M830 0L900 25L860 45ZM960 0L990 10L950 30ZM160 720L290 730L270 750L220 790L160 780ZM320 755H470L420 790L300 800Z"/>
  <path class="w" d="M1568 530L1540 520L1545 500L1520 515L1480 510L1460 480L1450 495L1480 520L1500 560L1530 545L1550 560L1525 585L1480 640L1450 690L1370 730L1330 745L1340 831H1568ZM330 831L380 810L440 795H460V831ZM935 755L945 743L972 742L965 755ZM1050 742L1070 728V755ZM940 765L1060 760L1200 775H940ZM310 810L345 800L330 831H300ZM645 385L680 376L660 386ZM1310 120L1342 106L1320 120ZM62 305L82 335H75ZM8 0H38L15 20Z"/>
  <path class="r" d="M35 0L5 50L0 60M0 190L20 195L50 225L45 280L70 330L132 385L128 430L130 490L145 535L175 570L168 610L178 640L130 690M470 0L450 30L430 130L440 200L430 320L410 370L405 410L355 560L335 600L330 640L285 685L255 683L210 720L130 710M430 130L470 95L485 118L520 130L570 125L600 105L640 95L645 75L725 150L735 190L780 205L770 230L792 265L765 300L760 360L745 385L705 400L685 405L682 435L650 480L640 530L650 560L630 600L605 625L595 650M835 85L850 65L925 88L1020 55L1050 20V0M835 85L800 140L775 170L770 205M1130 0L1135 45L1165 75L1188 125L1195 230L1135 290L1115 370L1110 470L1095 510M110 710L50 740L30 760L0 765M110 710L125 740L120 760L158 805L150 831M586 693L605 710L612 760L630 780M586 700L630 710L632 775H760M830 685L850 698L900 720L930 725L945 745M1430 485L1460 510L1470 545L1508 550"/>
  <path class="s" d="M670 0L760 45L1160 250L1450 400L1540 440"/>
  <path class="R" d="M280 831L290 770L300 745L315 720L345 715L390 740H480L545 735L586 693L640 697L700 680L735 703L800 680M861 633L885 625L895 600L915 580L960 590L1000 567H1080L1190 575L1225 560L1235 540L1290 548L1330 520L1370 487L1430 485M1432 440L1445 410L1495 370L1500 335L1515 321M1560 277L1568 250M0 800H160M160 800L230 831M260 831L275 800"/>
</g>

<path class="seam" d="M0 260.500H2127M0 605.500H2127M208.500 107V647M554.500 107V647M900.500 107V647M1245.500 107V647M1591.500 107V647M1936.500 107V647"/>

<g class="dots">
<circle cx="187" cy="119" r="2.500"/><circle cx="298" cy="155.500" r="2.500"/><circle cx="116" cy="180" r="2.500"/><circle cx="14" cy="194" r="2.500"/><circle cx="443" cy="191" r="2.500"/><circle cx="534" cy="160" r="2.500"/><circle cx="512" cy="267" r="2.500"/><circle cx="72" cy="298" r="2.500"/><circle cx="249.500" cy="298" r="2.500"/><circle cx="25.500" cy="393.500" r="2.500"/><circle cx="392" cy="401.700" r="2.500"/><circle cx="296" cy="420.500" r="2.500"/><circle cx="410" cy="430.500" r="2.500"/><circle cx="158.500" cy="461.500" r="2.500"/><circle cx="430.500" cy="472" r="2.500"/><circle cx="54" cy="564" r="2.500"/><circle cx="287.500" cy="585" r="2.500"/><circle cx="205.500" cy="614.600" r="2.500"/><circle cx="626" cy="114" r="2.500"/><circle cx="876.500" cy="123" r="3"/><circle cx="599" cy="205.700" r="2.500"/><circle cx="1041" cy="196" r="2.500"/><circle cx="762" cy="309.500" r="3"/><circle cx="731" cy="492" r="2.500"/><circle cx="657" cy="557.500" r="3"/><circle cx="930.500" cy="636" r="4"/><circle cx="1065" cy="587" r="2.500"/><circle cx="1401.500" cy="116" r="2.500"/><circle cx="1263" cy="190.500" r="2.500"/><circle cx="1426" cy="302" r="2.500"/><circle cx="1474" cy="303" r="2.500"/><circle cx="1501.500" cy="343" r="2.500"/><circle cx="1295" cy="429" r="2.500"/><circle cx="1585" cy="637" r="2.500"/><circle cx="1652.500" cy="139" r="2.500"/><circle cx="1954" cy="147.500" r="2.500"/><circle cx="1830" cy="205.500" r="2.500"/><circle cx="1884" cy="194" r="2.500"/><circle cx="1981.600" cy="357" r="2.500"/><circle cx="1906" cy="398" r="2.500"/><circle cx="1848" cy="492" r="2.500"/><circle cx="2088" cy="533" r="2.500"/><circle cx="1958.600" cy="558.600" r="2.500"/><circle cx="2106.500" cy="554" r="2.500"/><circle cx="1790.700" cy="601" r="2.500"/><circle cx="1807" cy="630" r="2.500"/><circle cx="1852.600" cy="629" r="2.500"/><circle cx="1675.500" cy="646" r="2.500"/>
</g>

<g class="town">
<text x="2" y="110">s</text><text x="187" y="113">Jeparit</text><text x="298" y="149.500">Warracknabeal</text><text x="115.700" y="173.500">Nhill</text><text x="15" y="188">Kaniva</text><text x="443" y="185.700">Donald</text><text x="533.500" y="154">Charlton</text><text x="512" y="261">St Arnaud</text><text x="72" y="292">Goroke</text><text x="26" y="387">Edenhope</text><text x="392" y="395.700">Stawell</text><text x="296" y="415">Zumsteins</text><text x="411" y="424.700">Great Western</text><text x="158" y="456">Balmoral</text><text x="430.500" y="466">Ararat</text><text x="54" y="558">Casterton</text><text x="288" y="579">Dunkeld</text><text x="626" y="108">Boort</text><text x="599.600" y="222.700">Wedderburn</text><text x="1041.500" y="173.700">Shepparton</text><text x="1040.500" y="189.700">- Mooroopna</text><text x="770" y="497">Daylesford</text><text x="1065" y="581">Healesville</text><text x="1263" y="169.700">Rural City of</text><text x="1263" y="184.700">Wangaratta</text><text x="1426" y="295.700">Bright</text><text x="1474.500" y="320">Mount Beauty</text><text x="1501" y="337">Falls Creek</text><text x="1295.500" y="423">Mount Buller</text><text x="1585" y="631">Bairnsdale</text><text x="1652" y="132.700">Corryong</text><text x="1953" y="141">Cooma</text><text x="1830" y="199">Jindabyne</text><text x="1917" y="199.700">Berridale</text><text x="1981" y="351">Bombala</text><text x="1906" y="392">Delegate</text><text x="1848" y="486">Goongerah</text><text x="2087" y="527">Gipsy Point</text><text x="1959" y="553">Cann River</text><text x="1790.700" y="595">Orbost</text><text x="1806.500" y="624">Marlo</text><text x="1675" y="626">Lakes</text><text x="1676" y="641">Entrance</text><text x="1900" y="634">Cape Conran</text>
<text x="2111" y="282.700" class="start">Bega</text><text x="2109.500" y="344" class="start">Merimbula</text><text x="2070" y="571" class="start">Mallacoota</text>
</g>
<g class="town mid"><text x="249.500" y="291.500">Horsham</text><text x="205" y="608">Hamilton</text><text x="1401" y="134">Wodonga</text><text x="876.500" y="115.700">Echuca</text></g>
<g class="town big"><text x="762" y="301.700">Bendigo</text><text x="656.700" y="549.700">Ballarat</text></g>
<text class="city" x="930.500" y="625.700" textLength="103">Melbourne</text>
<g class="park">
<text x="205.600" y="227.700">Little Desert</text><text x="206" y="246.500">National Park</text><text x="299.500" y="446">Grampians</text><text x="299.500" y="465">National Park</text><text x="1179.500" y="592">Yarra Ranges</text><text x="1179.500" y="611">National Park</text><text x="1741.400" y="228">Kosciuszko</text><text x="1741.400" y="247">National Park</text><text x="1750.600" y="523.700">Snowy River</text><text x="1751" y="542">National Park</text><text x="2044.500" y="610">Croajingolong</text><text x="2045" y="629">National Park</text><text x="2029" y="159" class="start">Wadbilliga</text><text x="2016.700" y="178" class="start">National Park</text>
</g>

<g class="shields">
<path d="M57 193H80V208H57ZM221 330H258V345H221ZM316 353H339V367H316ZM487 97H518V111.500H487ZM499 498H523V513H499ZM185 569H223V584H185ZM552 174H582V189H552ZM690 274H720V289H690ZM790 262H827V277H790ZM849 219H886V234H849ZM920 207H958V222H920ZM677 495H714V510H677ZM569 517H592V532H569ZM1104 201H1141V216H1104ZM2121 199H2145V214H2121ZM2110 311H2134V326H2110ZM2105 462H2129V477H2105ZM1861 582H1885V597H1861ZM713 552H733Q735 552 735 554V567L723 571L711 567V554Q711 552 713 552ZM1322 118H1349Q1351 118 1351 120V132L1336 136.500L1320 132V120Q1320 118 1322 118Z"/>
<text x="68.500" y="205">A8</text><text x="239.500" y="342">A200</text><text x="327.500" y="364.500">A8</text><text x="502.500" y="109">A79</text><text x="511" y="510">A8</text><text x="204" y="581">A200</text><text x="567" y="186">A79</text><text x="705" y="286">A79</text><text x="808.500" y="274">A300</text><text x="867.500" y="231">A300</text><text x="939" y="219">A300</text><text x="695.500" y="507">A300</text><text x="580.500" y="529">A8</text><text x="1122.500" y="213">A300</text><text x="2133" y="211">A1</text><text x="2122" y="323">A1</text><text x="2117" y="474">A1</text><text x="1873" y="594">A1</text><text class="m" x="723" y="566">M8</text><text class="m" x="1335.500" y="131.500">M31</text>
</g>

<g class="dev">
<text x="-105" y="440.500" textLength="284">For development purposes only</text><text x="240.500" y="440.500" textLength="284">For development purposes only</text><text x="586.500" y="440.500" textLength="284">For development purposes only</text><text x="932" y="440.500" textLength="284">For development purposes only</text><text x="1278" y="440.500" textLength="284">For development purposes only</text><text x="1623.500" y="440.500" textLength="284">For development purposes only</text><text x="1969" y="440.500" textLength="284">For development purposes only</text>
</g>
<rect x="0" y="107" width="2127" height="34" fill="url(#shade)"/>

<text class="google" x="8" y="637" textLength="84" lengthAdjust="spacingAndGlyphs"><tspan fill="#4285f4">G</tspan><tspan fill="#ea4335">o</tspan><tspan fill="#fbbc05">o</tspan><tspan fill="#4285f4">g</tspan><tspan fill="#34a853">l</tspan><tspan fill="#ea4335">e</tspan></text>

<path d="M1067.500 376C1067 356 1056 355 1056 344A11.500 11.500 0 0 1 1079 344C1079 355 1068 356 1067.500 376Z" fill="#fe7569" stroke="#000" stroke-width="2.300"/><circle cx="1067.500" cy="344.800" r="4" fill="#000"/>
</svg>
<div class="info">Brooklands Farm, 141 Ruffy Road, Ruffy, Victoria, 3666
  <svg class="close" width="12" height="12" viewBox="0 0 12 12"><path d="M1 1L11 11M11 1L1 11" stroke="#555" stroke-width="1.600"/></svg>
</div>
<div class="fullscreen"><svg width="26" height="26" viewBox="0 0 26 26"><path d="M2.500 9V2.500H9M17 2.500H23.500V9M23.500 17V23.500H17M9 23.500H2.500V17" fill="none" stroke="#666" stroke-width="3"/></svg></div>
<div class="legal"><span>Map data ©2020 Google</span><span>Terms of Use</span><span class="report">Report a map error</span></div>
</section>

<main class="content">
  <p class="address">Brooklands Farm<br>141 Ruffy Road, Ruffy<br>Victoria, Australia<br>T: 0429 939 273</p>
  <p class="intro">Tanya is Brooklands Farm’s bookings manager. Contact her today to book your country getaway. Just let her know<br>what dates you would like to stay and how many guests.</p>
  <form class="form">
    <label for="name">Name *</label><input id="name">
    <label for="mobile">Mobile</label><input id="mobile">
    <label for="email">Email *</label><input id="email">
  </form>
</main>
</body>
</html>
```
FILE: styles.css
```css
* { box-sizing: border-box; }
body { margin: 0; height: 1204px; overflow: hidden; background: #fff; color: #555; font-family: "Open Sans", sans-serif; font-size: 18.670px; line-height: 28px; }

.header { display: flex; align-items: flex-start; height: 107px; padding-left: 277px; border-bottom: 1px solid #ccc; background: #fff; }
.logo { margin-top: 22px; width: 136px; height: 54px; }
.script { font: italic 600 26px Lato, sans-serif; fill: #222; }
.farm { font: 900 14px Lato, sans-serif; fill: #222; }
.swash { fill: none; stroke: #222; stroke-width: 2.200; stroke-linecap: round; }
.rule { stroke: #222; stroke-width: 2; }
.nav { display: flex; gap: 54.300px; margin: 30px 0 0 657px; font-size: 22.250px; line-height: 30px; color: #777; -webkit-text-stroke: .350px currentColor; }
.nav .active { color: #000; }
.search { margin: 31px 0 0 33px; }

.map { position: relative; height: 540px; overflow: hidden; background: #616161; }
.canvas { display: block; }
.land { fill: #616161; }
.tile path { vector-effect: non-scaling-stroke; }
.g { fill: #476a46; }
.l { fill: #4c664c; }
.d { fill: #445f42; }
.n { fill: #616161; }
.u { fill: #5a5a58; }
.w { fill: #345a7a; }
.r, .R, .X, .h, .s { fill: none; stroke-linejoin: round; }
.r { stroke: #6c5b31; stroke-width: 1.300; }
.R { stroke: #7c682c; stroke-width: 2.400; }
.X { stroke: #806c2d; stroke-width: 4; }
.h { stroke: #696969; stroke-width: 1; }
.s { stroke: #424242; stroke-width: 1.200; stroke-dasharray: 3 3; }
.seam { stroke: #fff; stroke-opacity: .08; }
.dots circle { fill: #707070; stroke: #222; stroke-width: 1.400; }
.town, .park, .city { font-family: Roboto, sans-serif; text-anchor: middle; paint-order: stroke; stroke: #606060; stroke-opacity: .75; stroke-width: 3px; stroke-linejoin: round; }
.town { font-size: 14.850px; fill: #252525; }
.mid { font-size: 16px; }
.big { font-size: 17.330px; fill: #1c1c1c; }
.city { font-size: 21px; font-weight: 500; fill: #161616; }
.park { font-size: 19px; fill: #172e20; }
.town .start, .park .start { text-anchor: start; }
.shields path { fill: #2e3829; }
.shields text { font: 700 12px Roboto, sans-serif; text-anchor: middle; fill: #9c9c9c; }
.shields .m { fill: #82713d; font-weight: 500; }
.dev { font: 20px "Liberation Sans", Arial, sans-serif; fill: #fff; fill-opacity: .5; }
.google { font: 700 28px Lato, sans-serif; paint-order: stroke; stroke: #c8c8c8; stroke-width: 4px; stroke-linejoin: round; }

.info { position: absolute; left: 851px; top: 159px; width: 457px; height: 53px; padding: 13px 17px; border-radius: 10px; background: #fff; box-shadow: 0 3px 9px rgba(0,0,0,.5); font: 300 17.400px/28px Roboto, sans-serif; color: #333; white-space: nowrap; }
.info::after { content: ""; position: absolute; left: 214px; top: 52.500px; border: 14.500px solid transparent; border-top-color: #fff; border-bottom: 0; }
.close { position: absolute; right: 6px; top: 6px; }
.fullscreen { position: absolute; left: 2067px; top: 13px; width: 54px; height: 54px; display: grid; place-items: center; border-radius: 3px; background: #fff; box-shadow: 0 1px 4px rgba(0,0,0,.3); }
.legal { position: absolute; right: 0; bottom: 0; display: flex; gap: 1px; height: 19px; width: 380px; font: 13.400px/21px Roboto, sans-serif; color: #3c3f42; white-space: nowrap; }
.legal span { padding: 0 6.500px; background: rgba(225,228,232,.76); }
.legal span:first-child { width: 162px; }
.legal span:nth-child(2) { width: 95px; }
.legal .report { flex: 1; margin-left: 2px; }

.content { padding: 57px 0 0 277px; }
.address { margin: 0 0 17.500px; font-weight: 700; }
.intro { margin: 0; letter-spacing: .122px; }
.form { display: flex; flex-direction: column; width: 1027px; padding-top: 9.500px; }
label { color: #000; font-size: 17.330px; font-weight: 700; line-height: 26px; margin-bottom: 13px; }
input { height: 49px; margin: 0 0 21px; padding: 0 12px; border: 1px solid #ccc; background: #fff; font: inherit; }
```
